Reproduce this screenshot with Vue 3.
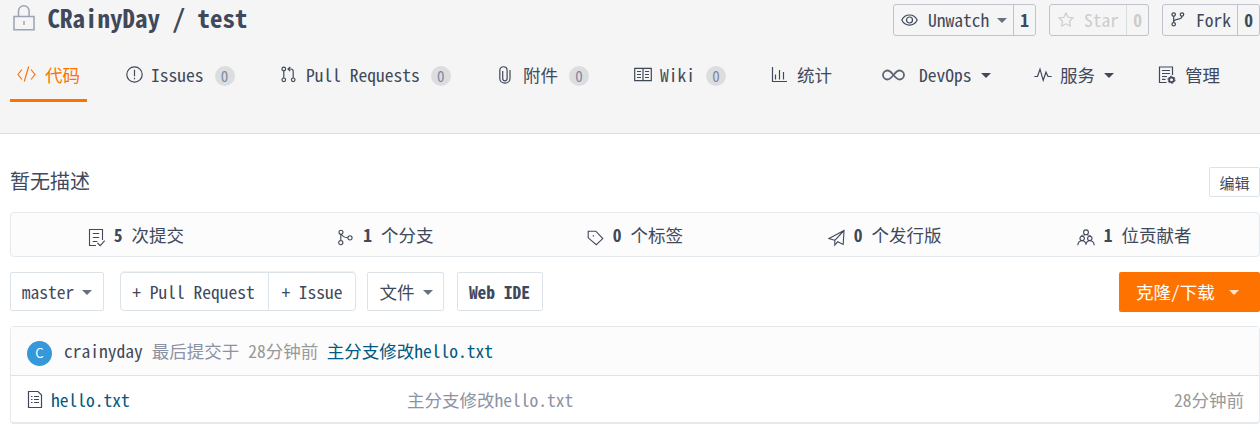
<script setup>
const tabs = [
  { key: 'code', label: '代码', active: true },
  { key: 'issues', label: 'Issues', count: 0 },
  { key: 'pulls', label: 'Pull Requests', count: 0 },
  { key: 'attach', label: '附件', count: 0 },
  { key: 'wiki', label: 'Wiki', count: 0 },
  { key: 'chart', label: '统计' },
  { key: 'devops', label: 'DevOps', caret: true },
  { key: 'service', label: '服务', caret: true },
  { key: 'manage', label: '管理' },
]
const stats = [
  { key: 'commits', n: 5, label: '次提交' },
  { key: 'branches', n: 1, label: '个分支' },
  { key: 'tags', n: 0, label: '个标签' },
  { key: 'releases', n: 0, label: '个发行版' },
  { key: 'people', n: 1, label: '位贡献者' },
]
const icons = {
  code: { w: 19, h: 18, d: 'M5 4.5 1 9.5 5 14.5M14 4.5 18 9.5 14 14.5M11.7 1.5 7.3 16.5' },
  issues: { w: 17, h: 17, d: 'M8.5 .8a7.7 7.7 0 1 1 0 15.4a7.7 7.7 0 1 1 0-15.4ZM8.5 3.8v6.4M8.5 11.8v1.5' },
  pulls: { w: 15, h: 17, d: 'M2.8 1.2a1.8 1.8 0 1 1 0 3.6a1.8 1.8 0 1 1 0-3.6ZM2.8 4.8v7.2M2.8 12a1.8 1.8 0 1 1 0 3.6a1.8 1.8 0 1 1 0-3.6ZM12.2 12a1.8 1.8 0 1 1 0 3.6a1.8 1.8 0 1 1 0-3.6ZM12.2 12V5.2Q12.2 3 10 3H7.2M9.3 .9 7 3l2.3 2.1' },
  attach: { w: 12, h: 18, d: 'M3.7 5v7.6a2.2 2.2 0 0 0 4.4 0V4.2C8.1-.4 .8-.4 .8 4.2V12.4c0 6.2 10.2 6.2 10.2 0V4' },
  wiki: { w: 18, h: 15, d: 'M.7 1.3H17.3V13.7H.7ZM9 1.3V13.7M3 4.5h4M3 7.5h4M3 10.5h4M11 4.5h4M11 7.5h4M11 10.5h4' },
  chart: { w: 16, h: 16, d: 'M1.5 0V14.5H16M4.5 7.5v5M8.5 3v9.5M12.5 5v7.5' },
  devops: { w: 23, h: 12, d: 'M11.5 6C9.3 3.4 8 1.5 5.5 1.5a4.5 4.5 0 0 0 0 9C8 10.5 9.3 8.6 11.5 6S15 1.5 17.5 1.5a4.5 4.5 0 0 1 0 9C15 10.5 13.7 8.6 11.5 6Z' },
  service: { w: 18, h: 14, d: 'M.3 8.5H3.5L6 1.2 9.2 12.3 12 4.2 14 8.5H17.7' },
  manage: { w: 18, h: 18, d: 'M14.5 9V1H1.5V16.5H8.5M4 4.5h8M4 7.5h8M4 10.5h5M4 13.3h3.5' },
  commits: { w: 17, h: 19, d: 'M14.5 12V1.5H1.5V17.5H8M4.8 5.5h6.4M4.8 9.5h6.4M4.8 13.5h4.5M9.5 15l2.7 2.7 4.5-5' },
  branches: { w: 17, h: 17, d: 'M4 1.2a2 2 0 1 1 0 4a2 2 0 1 1 0-4ZM3.8 11.5a2.1 2.1 0 1 1 0 4.2a2.1 2.1 0 1 1 0-4.2ZM13 6.8a2.1 2.1 0 1 1 0 4.2a2.1 2.1 0 1 1 0-4.2ZM3.8 5.2v6.3M4.5 5.2C5.3 7.8 7.5 8.6 10.9 8.8' },
  tags: { w: 17, h: 17, d: 'M1.2 2.2H8.8L15.8 9.6 9.3 15.7 1.2 8.8ZM6.3 6.2v1.3M5.8 6.8h1.3' },
  releases: { w: 17, h: 17, d: 'M1 9.5 16 1.5 15.2 15.5 9.7 12.8 6.8 16V11.3ZM6.8 11.3 16 1.5' },
  people: { w: 18, h: 17, d: 'M9 .9a2.4 2.4 0 1 1 0 4.8a2.4 2.4 0 1 1 0-4.8ZM5.2 7.2a2.2 2.2 0 1 1 0 4.4a2.2 2.2 0 1 1 0-4.4ZM12.8 7.2a2.2 2.2 0 1 1 0 4.4a2.2 2.2 0 1 1 0-4.4ZM.8 16.3C1 13.5 2.8 11.7 5.2 11.7S8.8 13.2 9 15.8C9.2 13.2 10.4 11.7 12.8 11.7S17 13.5 17.2 16.3M4.2 7C5 6 6.5 5.7 9 5.7S13 6 13.8 7' },
}
</script>

<template>
  <main class="page">
    <header class="header">
      <div class="top">
        <svg class="lock" width="24" height="27" viewBox="0 0 24 27">
          <path d="M2 11.5H22V24.8H2ZM6.5 11.5V6a5.3 5.3 0 0 1 10.6 0V11.5M12 16v4" />
        </svg>
        <h1 class="title">CRainyDay / test</h1>
        <div class="actions">
          <div class="act watch">
            <span class="main">
              <svg width="17" height="12" viewBox="0 0 17 12"><path d="M.8 6C4-.7 13-.7 16.2 6C13 12.7 4 12.7 .8 6ZM8.5 3a3 3 0 1 1 0 6a3 3 0 1 1 0-6Z" /></svg>
              <span class="txt">Unwatch</span><i class="caret"></i>
            </span><b>1</b>
          </div>
          <div class="act star">
            <span class="main">
              <svg width="16" height="15" viewBox="0 0 16 15"><path d="M8 1.1 10.1 5.3 15 6 11.5 9.3 12.3 14 8 11.8 3.7 14 4.5 9.3 1 6 5.9 5.3Z" /></svg>
              <span class="txt">Star</span>
            </span><b>0</b>
          </div>
          <div class="act fork">
            <span class="main">
              <svg width="14" height="15" viewBox="0 0 14 15"><path d="M2.7 .8a1.7 1.7 0 1 1 0 3.4a1.7 1.7 0 1 1 0-3.4ZM2.7 10.5a1.7 1.7 0 1 1 0 3.4a1.7 1.7 0 1 1 0-3.4ZM11 .8a1.7 1.7 0 1 1 0 3.4a1.7 1.7 0 1 1 0-3.4ZM2.7 4.2v6.3M11 4.2C11 8.5 4.5 5.8 2.7 9.3" /></svg>
              <span class="txt">Fork</span>
            </span><b>0</b>
          </div>
        </div>
      </div>
      <nav class="tabs">
        <a v-for="t in tabs" :key="t.key" class="tab" :class="[t.key, { active: t.active }]">
          <span class="ico">
            <svg :width="icons[t.key].w" :height="icons[t.key].h" :viewBox="`0 0 ${icons[t.key].w} ${icons[t.key].h}`">
              <path :d="icons[t.key].d" />
              <circle v-if="t.key === 'manage'" class="gear" cx="13.5" cy="13.8" r="2.4" />
              <circle v-if="t.key === 'manage'" class="teeth" cx="13.5" cy="13.8" r="3.6" />
            </svg>
          </span>
          <span>{{ t.label }}</span>
          <em v-if="t.count !== undefined" class="badge">{{ t.count }}</em>
          <i v-if="t.caret" class="caret"></i>
        </a>
      </nav>
    </header>

    <section class="body">
      <div class="desc">
        <span>暂无描述</span>
        <button class="edit">编辑</button>
      </div>

      <div class="stats">
        <div v-for="s in stats" :key="s.key" class="stat" :class="s.key">
          <svg :width="icons[s.key].w" :height="icons[s.key].h" :viewBox="`0 0 ${icons[s.key].w} ${icons[s.key].h}`">
            <path :d="icons[s.key].d" />
          </svg>
          <b>{{ s.n }}</b><span>{{ s.label }}</span>
        </div>
      </div>

      <div class="toolbar">
        <button class="btn branch">master<i class="caret"></i></button>
        <div class="group">
          <button class="btn pr">+ Pull Request</button>
          <button class="btn issue">+ Issue</button>
        </div>
        <button class="btn file">文件<i class="caret"></i></button>
        <button class="btn ide">Web IDE</button>
        <button class="clone">克隆/下载<i class="caret"></i></button>
      </div>

      <div class="files">
        <div class="latest">
          <span class="avatar">C</span>
          <span class="author">crainyday</span>
          <span class="muted">最后提交于</span>
          <span class="time">28分钟前</span>
          <a class="link">主分支修改hello.txt</a>
        </div>
        <div class="row">
          <svg width="16" height="19" viewBox="0 0 16 19">
            <path d="M1.5 1.5H11L14.5 5V17.5H1.5ZM4 6.5h1.5M7 6.5h5M4 9.5h1.5M7 9.5h5M4 12.5h1.5M7 12.5h5" />
          </svg>
          <a class="link name">hello.txt</a>
          <span class="muted msg">主分支修改hello.txt</span>
          <span class="time">28分钟前</span>
        </div>
      </div>
    </section>
  </main>
</template>

<style>
body { margin: 0; background: #fff; }
</style>

<style scoped>
* { box-sizing: border-box; }
.page {
  width: 1260px; height: 436px; overflow: hidden; color: #40485b;
  font: 17.5px/26px "Noto Sans Mono CJK SC", "Noto Sans CJK SC", monospace;
  white-space: nowrap;
}
svg { display: block; flex: none; overflow: visible; fill: none; stroke: currentColor; stroke-width: 1.2; }
button { font: inherit; color: inherit; padding: 0; margin: 0; background: #fff; }
.caret { width: 0; height: 0; border: 5px solid transparent; border-top: 5px solid currentColor; border-bottom: 0; }
.header { height: 134px; background: #f5f5f5; border-bottom: 1px solid #dcdddd; }
.top { display: flex; height: 40px; padding-left: 12px; }
.lock { margin-top: 5px; color: #9ba3b5; stroke-width: 1.5; }
.title { margin: -1px 0 0 11.5px; font-size: 25px; line-height: 36px; font-weight: 700; }
.actions { display: flex; margin: 4px 0 0 auto; gap: 13px; }
.act { display: flex; height: 32px; border: 1px solid #bfc3cd; border-radius: 3px; }
.act .main { display: flex; align-items: center; flex: 1; padding-left: 8px; }
.act svg { margin-bottom: 1px; }
.act b { display: flex; align-items: center; justify-content: center; width: 22px; border-left: 1px solid #bfc3cd; }
.act .txt { margin-left: 10px; }
.watch { width: 143px; }
.act.watch .main { padding-left: 7px; }
.watch .caret { margin-left: 8px; color: #687080; }
.star { width: 100px; color: #ccc; }
.star b { border-left-color: #dcdddd; }
.fork { width: 98px; }
.fork .txt { margin-left: 11px; }

.tabs { display: grid; grid-template-columns: 116px 155px 218px 134px 138px 111px 152px 124px 92px; height: 62px; padding-left: 10px; }
.tab { display: flex; align-items: center; height: 62px; padding-top: 8px; }
.tab .ico { width: 25px; flex: none; margin-bottom: 1px; }
.code { width: 77px; padding-left: 7px; }
.tab.active { color: #fe7300; border-bottom: 3px solid #fe7300; padding-top: 11px; }
.tab.code .ico { width: 28px; margin-bottom: 3px; }
.attach .ico { width: 24px; }
.tab.wiki { padding-left: 1px; }
.wiki .ico, .chart .ico, .service .ico { width: 26px; }
.devops .ico { width: 37px; }
.devops svg { stroke-width: 1.8; color: #5c6475; }
.manage .ico { width: 27px; }
.gear { stroke-width: 1.8; }
.teeth { stroke-width: 1; stroke-dasharray: 1.9 1.87; }
.badge { width: 20px; height: 20px; margin: 2px 0 0 11px; border-radius: 50%; background: #dcdddf; color: #8088a5; font-size: 15px; line-height: 20px; font-style: normal; text-align: center; }
.tab .caret { margin-left: 9px; }

.body { padding-left: 10px; }
.desc { display: flex; justify-content: space-between; height: 78px; padding-top: 33px; font-size: 20px; line-height: 28px; }
.edit { width: 51px; height: 30px; padding-top: 1px; border: 1px solid #dce3e8; border-radius: 2px; font-size: 15px; }
.stats { display: grid; grid-template-columns: repeat(5, 1fr); height: 45px; border: 1px solid #e3e9ed; border-radius: 4px; background: #fcfcfc; }
.stat { display: flex; align-items: center; justify-content: center; }
.stat svg { margin-top: 6px; stroke-width: 1.1; }
.commits svg { margin-top: 5px; }
.stat b { margin: 0 9px; }

.toolbar { display: flex; height: 40px; margin-top: 15px; }
.btn { display: flex; align-items: center; justify-content: center; height: 39px; border: 1px solid #dce3e8; border-radius: 2px; padding-top: 1px; }
.btn .caret { color: #687080; margin-left: 8px; }
.branch { width: 94px; margin-right: 16px; }
.group { display: flex; height: 39px; margin-right: 11px; border-radius: 4px; box-shadow: 0 -1px 0 #eef1f3; }
.pr { width: 149px; padding-right: 2px; border-radius: 4px 0 0 4px; }
.issue { width: 88px; margin-left: -1px; border-radius: 0 4px 4px 0; }
.file { width: 77px; margin-right: 13px; padding-left: 1px; }
.ide { width: 86px; padding-right: 1px; font-weight: 700; }
.clone { display: flex; align-items: center; width: 141px; height: 40px; margin-left: auto; padding-left: 17px; border: 0; border-radius: 2px; background: #fe7300; color: #fff; }
.clone .caret { margin-left: 14px; opacity: .8; }

.files { height: 98px; margin-top: 14px; border: 1px solid #e3e9ed; border-bottom-width: 2px; border-radius: 4px; }
.latest { display: flex; align-items: center; height: 49px; padding-left: 16px; border-bottom: 1px solid #dfe3e6; background: #fcfcfc; }
.avatar { width: 25px; height: 25px; margin: 4px 12px 0 0; border-radius: 50%; background: #3498db; color: #fff; font: 13px/24px "Noto Sans CJK SC", sans-serif; text-align: center; }
.author { margin-right: 9px; }
.muted { color: #8c92a4; }
.time { color: #999; }
.latest .muted { margin-right: 9px; }
.latest .time { margin-right: 8.5px; }
.link { color: #005980; }
.row { display: flex; align-items: center; height: 47px; padding: 0 15px 0 16px; }
.name { width: 356px; margin-left: 8px; }
.row .time { margin-left: auto; }
</style>
